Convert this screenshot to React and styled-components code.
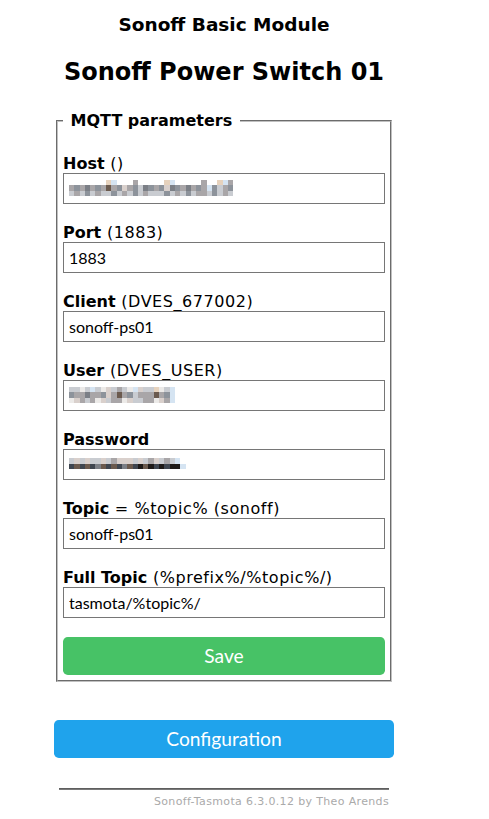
import React from 'react';
import styled, { createGlobalStyle } from 'styled-components';

const GlobalStyle = createGlobalStyle`
  html, body {
    margin: 0;
    background: #fff;
  }
  body {
    font-family: "DejaVu Sans", Verdana, sans-serif;
    color: #000;
  }
`;

const PALETTE = {
  '.': 'transparent',
  a: '#d9d0cc',
  b: '#a9a6a8',
  c: '#8d939b',
  d: '#7b7f86',
  e: '#e6d2bd',
  u: '#d5e4f2',
  k: '#3f4650',
  m: '#6b5a4e',
  n: '#1e1a18',
  l: '#c9ccd1',
  w: '#eceae8',
};

const fields = [
  { key: 'host', label: 'Host', hint: ' ()', mosaic: [
    '.......eu...b.....eu.....b..eub',
    'bcbdbcbmbcabcldcbcadcbdbcbuclbc',
    'lblclbllclblclblllclblclbblclbl',
  ] },
  { key: 'port', label: 'Port', hint: ' (1883)', value: '1883' },
  { key: 'client', label: 'Client', hint: ' (DVES_677002)', value: 'sonoff-ps01' },
  { key: 'user', label: 'User', hint: ' (DVES_USER)', mosaic: [
    'llwlulwalblwuallewlu',
    'cbbdbbcabmbclbbbmbcu',
    'wablbwalbbwallbbwabu',
  ] },
  { key: 'password', label: 'Password', hint: '', mosaic: [
    'lalallalbaaalalbalblu.',
    'kmkmkdmkmkdmknmnknknnu',
  ] },
  { key: 'topic', label: 'Topic', hint: ' = %topic% (sonoff)', value: 'sonoff-ps01' },
  { key: 'fulltopic', label: 'Full Topic', hint: ' (%prefix%/%topic%/)', value: 'tasmota/%topic%/' },
];

const Page = styled.div`
  width: 340px;
  margin-left: 54px;
  padding-top: 14px;
`;

const Header = styled.div`
  text-align: center;
`;

const ModuleTitle = styled.h3`
  margin: 0;
  font-size: 18.5px;
  line-height: 22px;
  font-weight: bold;
`;

const DeviceTitle = styled.h2`
  margin: 22px 0 0;
  font-size: 24px;
  line-height: 28px;
  font-weight: bold;
`;

const Fieldset = styled.fieldset`
  margin: 25px 2px 0;
  padding: 5px;
  border: 2px groove #c0c0c0;
  min-width: 0;
`;

const Legend = styled.legend`
  padding: 0 2px;
  font-size: 16px;
  line-height: 19px;
  font-weight: bold;
`;

const Form = styled.form`
  display: flex;
  flex-direction: column;
  gap: 19px;
  padding-top: 19px;
  margin: 0;
`;

const Field = styled.div`
  display: flex;
  flex-direction: column;
`;

const Label = styled.label`
  font-size: 16px;
  line-height: 19px;
  white-space: nowrap;
  letter-spacing: 0.55px;

  b {
    font-weight: bold;
    letter-spacing: 0;
  }
`;

const Input = styled.input`
  display: block;
  width: 100%;
  box-sizing: border-box;
  height: 31px;
  margin: 0;
  padding: 5px;
  border: 1px solid #767676;
  font-family: Lato, "Liberation Sans", sans-serif;
  font-size: 16px;
  line-height: 19px;
  color: #000;
  background: #fff;
  outline: none;
`;

const MaskedBox = styled.div`
  box-sizing: border-box;
  height: 31px;
  padding: ${({ $rows }) => ($rows === 2 ? '8px 5px' : '6px 5px')};
  border: 1px solid #767676;
  display: flex;
  flex-direction: column;
`;

const MosaicRow = styled.div`
  display: flex;
`;

const MosaicCell = styled.span`
  display: block;
  width: 5.3px;
  height: ${({ $h }) => $h}px;
  background: ${({ $c }) => $c};
`;

const Button = styled.button`
  display: block;
  width: 100%;
  border: 0;
  border-radius: 0.3rem;
  background-color: ${({ $tone }) => ($tone === 'green' ? '#47c266' : '#1fa3ec')};
  color: #fff;
  font-family: Lato, "Liberation Sans", sans-serif;
  font-size: 19.2px;
  line-height: 38px;
  padding: 0;
  cursor: pointer;
`;

const ConfigForm = styled.form`
  margin: 38px 0 0;
`;

const Footer = styled.div`
  margin-top: 30px;
  padding: 0 5px;
  text-align: right;
  font-size: 11px;
  line-height: 13px;
  letter-spacing: 0.35px;
`;

const Rule = styled.hr`
  margin: 0 0 5px;
  border: 0;
  border-top: 1px solid #5e5e5e;
  border-bottom: 1px solid #7a7a7a;
`;

const Credit = styled.a`
  color: #aaa;
  text-decoration: none;
`;

function Mosaic({ rows }) {
  const h = rows.length === 2 ? 5.5 : 5.3;
  return (
    <MaskedBox $rows={rows.length}>
      {rows.map((row, i) => (
        <MosaicRow key={i}>
          {row.split('').map((ch, j) => (
            <MosaicCell key={j} $h={h} $c={PALETTE[ch]} />
          ))}
        </MosaicRow>
      ))}
    </MaskedBox>
  );
}

export default function App() {
  return (
    <>
      <GlobalStyle />
      <Page>
        <Header>
          <ModuleTitle>Sonoff Basic Module</ModuleTitle>
          <DeviceTitle>Sonoff Power Switch 01</DeviceTitle>
        </Header>
        <Fieldset>
          <Legend>{'\u00a0MQTT parameters\u00a0'}</Legend>
          <Form onSubmit={(e) => e.preventDefault()}>
            {fields.map((f) => (
              <Field key={f.key}>
                <Label htmlFor={f.key}>
                  <b>{f.label}</b>
                  {f.hint}
                </Label>
                {f.mosaic ? (
                  <Mosaic rows={f.mosaic} />
                ) : (
                  <Input id={f.key} defaultValue={f.value} readOnly />
                )}
              </Field>
            ))}
            <Button type="submit" $tone="green">Save</Button>
          </Form>
        </Fieldset>
        <ConfigForm onSubmit={(e) => e.preventDefault()}>
          <Button type="submit">Configuration</Button>
        </ConfigForm>
        <Footer>
          <Rule />
          <Credit href="#">Sonoff-Tasmota 6.3.0.12 by Theo Arends</Credit>
        </Footer>
      </Page>
    </>
  );
}
